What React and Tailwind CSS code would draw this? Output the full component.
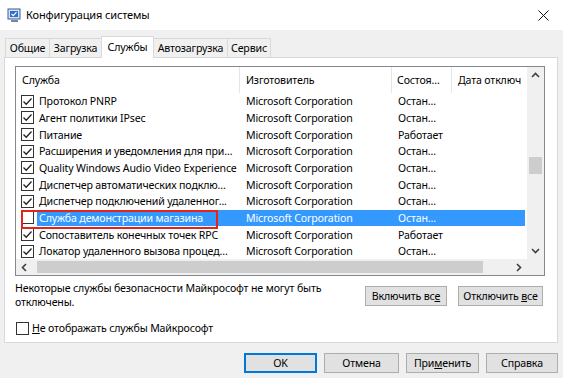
import React from 'react';

const rows = [
  { name: 'Протокол PNRP', state: 'Остан...', on: true },
  { name: 'Агент политики IPsec', state: 'Остан...', on: true },
  { name: 'Питание', state: 'Работает', on: true },
  { name: 'Расширения и уведомления для при...', state: 'Остан...', on: true },
  { name: 'Quality Windows Audio Video Experience', state: 'Остан...', on: true },
  { name: 'Диспетчер автоматических подклю...', state: 'Остан...', on: true },
  { name: 'Диспетчер подключений удаленног...', state: 'Остан...', on: true },
  { name: 'Служба демонстрации магазина', state: 'Остан...', on: false, selected: true },
  { name: 'Сопоставитель конечных точек RPC', state: 'Работает', on: true },
  { name: 'Локатор удаленного вызова процед...', state: 'Остан...', on: true },
];

function CheckBox({ checked }) {
  return (
    <div className="w-[13px] h-[13px] border border-[#333] bg-white flex items-center justify-center">
      {checked && (
        <svg width="11" height="11" viewBox="0 0 11 11">
          <path d="M1.5 5.5 L4.2 8.2 L9.5 2.5" fill="none" stroke="#222" strokeWidth="1.3" />
        </svg>
      )}
    </div>
  );
}

function Chevron({ dir }) {
  const d = {
    up: 'M1 6 L4.5 2.5 L8 6',
    down: 'M1 3 L4.5 6.5 L8 3',
    left: 'M6 1 L2.5 4.5 L6 8',
    right: 'M3 1 L6.5 4.5 L3 8',
  }[dir];
  return (
    <svg width="9" height="9" viewBox="0 0 9 9">
      <path d={d} fill="none" stroke="#404040" strokeWidth="1.6" />
    </svg>
  );
}

function Tab({ label, w, active }) {
  if (active) {
    return (
      <div className={`${w} h-[22px] -mb-px bg-white border border-b-0 border-[#d9d9d9] flex justify-center pt-[3px] relative z-10`}>
        {label}
      </div>
    );
  }
  return (
    <div className={`${w} h-[19px] bg-[#f0f0f0] border border-b-0 border-[#d9d9d9] -ml-px flex justify-center pt-[2px]`}>
      {label}
    </div>
  );
}

function Button({ children, className = '', primary }) {
  return (
    <div
      className={`h-[20px] bg-[#e1e1e1] flex items-center justify-center ${primary ? 'border-2 border-[#0078d7]' : 'border border-[#adadad]'} ${className}`}
    >
      {children}
    </div>
  );
}

export default function App() {
  return (
    <div
      className="relative w-[563px] h-[378px] bg-[#f0f0f0] overflow-hidden text-[10.6px] leading-[14px] tracking-[-0.15px] text-black"
      style={{ fontFamily: '"Noto Sans", "Open Sans", sans-serif' }}
    >
      {/* title bar */}
      <div className="h-[30px] bg-white flex items-center pl-[7px] pr-[14px]">
        <svg width="15" height="15" viewBox="0 0 15 15">
          <rect x="1" y="1" width="12" height="10" fill="#d6e4f5" stroke="#3a5a8c" />
          <rect x="3" y="3" width="8" height="6" fill="#2d6fcf" />
          <path d="M4.5 6 L6.3 7.6 L9.5 4.2" fill="none" stroke="#fff" strokeWidth="1.2" />
          <rect x="4" y="12" width="7" height="2" fill="#7a8699" />
        </svg>
        <span className="ml-[4px] text-[11px]">Конфигурация системы</span>
        <svg className="ml-auto" width="11" height="11" viewBox="0 0 11 11">
          <path d="M0.5 0.5 L10.5 10.5 M10.5 0.5 L0.5 10.5" stroke="#111" strokeWidth="1" />
        </svg>
      </div>

      {/* tabs */}
      <div className="mt-[6px] pl-[4px] flex items-end">
        <Tab label="Общие" w="w-[45px] ml-px" />
        <Tab label="Загрузка" w="w-[53px]" />
        <Tab label="Службы" w="w-[53px] -ml-px" active />
        <Tab label="Автозагрузка" w="w-[75px]" />
        <Tab label="Сервис" w="w-[44px]" />
      </div>

      {/* panel */}
      <div className="ml-[4px] w-[554px] h-[286px] bg-white border border-[#d9d9d9]">
        <div className="ml-[10px] mt-[8px] w-[530px] h-[210px] border border-[#828790] flex flex-col">
          <div className="flex flex-1 min-h-0">
            <div className="flex-1 min-w-0 overflow-hidden">
              {/* header */}
              <div className="flex h-[26px] items-center whitespace-nowrap">
                <div className="w-[224px] h-full pl-[6px] flex items-center border-r border-[#e5e5e5]">Служба</div>
                <div className="w-[152px] h-full pl-[6px] flex items-center border-r border-[#e5e5e5]">Изготовитель</div>
                <div className="w-[60px] h-full pl-[5px] flex items-center border-r border-[#e5e5e5]">Состоя...</div>
                <div className="flex-1 h-full pl-[6px] flex items-center overflow-hidden">Дата отключ</div>
              </div>
              {rows.map((r, i) => (
                <div key={i} className="flex h-[16.67px] items-center whitespace-nowrap">
                  <div className="w-[21px] pl-[5px] flex items-center">
                    <CheckBox checked={r.on} />
                  </div>
                  <div className={`flex-1 h-full flex items-center mr-[2px] ${r.selected ? 'bg-[#3399ff] text-white' : ''}`}>
                    <div className="w-[203px] pl-[2px]">{r.name}</div>
                    <div className="w-[152px] pl-[6px]">Microsoft Corporation</div>
                    <div className="w-[60px] pl-[6px]">{r.state}</div>
                  </div>
                </div>
              ))}
            </div>
            {/* vertical scrollbar */}
            <div className="w-[17px] bg-[#f0f0f0] flex flex-col items-center">
              <div className="h-[17px] flex items-center justify-center"><Chevron dir="up" /></div>
              <div className="flex-1 w-full px-[2px] pt-[73px]">
                <div className="h-[17px] bg-[#cdcdcd]" />
              </div>
              <div className="h-[17px] flex items-center justify-center"><Chevron dir="down" /></div>
            </div>
          </div>
          {/* horizontal scrollbar */}
          <div className="h-[16px] flex bg-[#f0f0f0]">
            <div className="w-[17px] flex items-center justify-center"><Chevron dir="left" /></div>
            <div className="flex-1 py-[2px] pl-[4px] pr-[27px]">
              <div className="h-full bg-[#cdcdcd]" />
            </div>
            <div className="w-[17px] flex items-center justify-center"><Chevron dir="right" /></div>
            <div className="w-[17px] bg-[#f0f0f0]" />
          </div>
        </div>

        <div className="flex items-start">
          <div className="ml-[10px] mt-[5px] w-[350px] leading-[14px]">
            Некоторые службы безопасности Майкрософт не могут быть
            <br />
            отключены.
          </div>
          <Button className="mt-[10px] w-[82px]">
            <span>
              Включить вс<span className="underline">е</span>
            </span>
          </Button>
          <Button className="mt-[10px] ml-[11px] w-[85px]">
            <span>
              Отключить <span className="underline">в</span>се
            </span>
          </Button>
        </div>

        <div className="ml-[11px] mt-[12px] flex items-center">
          <CheckBox checked={false} />
          <span className="ml-[3px]">
            <span className="underline">Н</span>е отображать службы Майкрософт
          </span>
        </div>
      </div>

      {/* dialog buttons */}
      <div className="mt-[10px] pr-[5px] flex justify-end gap-[7px]">
        <Button primary className="w-[73px]">OK</Button>
        <Button className="w-[75px]">Отмена</Button>
        <Button className="w-[73px]">
          <span>
            При<span className="underline">м</span>енить
          </span>
        </Button>
        <Button className="w-[72px]">Справка</Button>
      </div>

      {/* annotation */}
      <div className="absolute left-[21px] top-[210px] w-[197px] h-[19px] border-2 border-[#e3241b] pointer-events-none" />
    </div>
  );
}
